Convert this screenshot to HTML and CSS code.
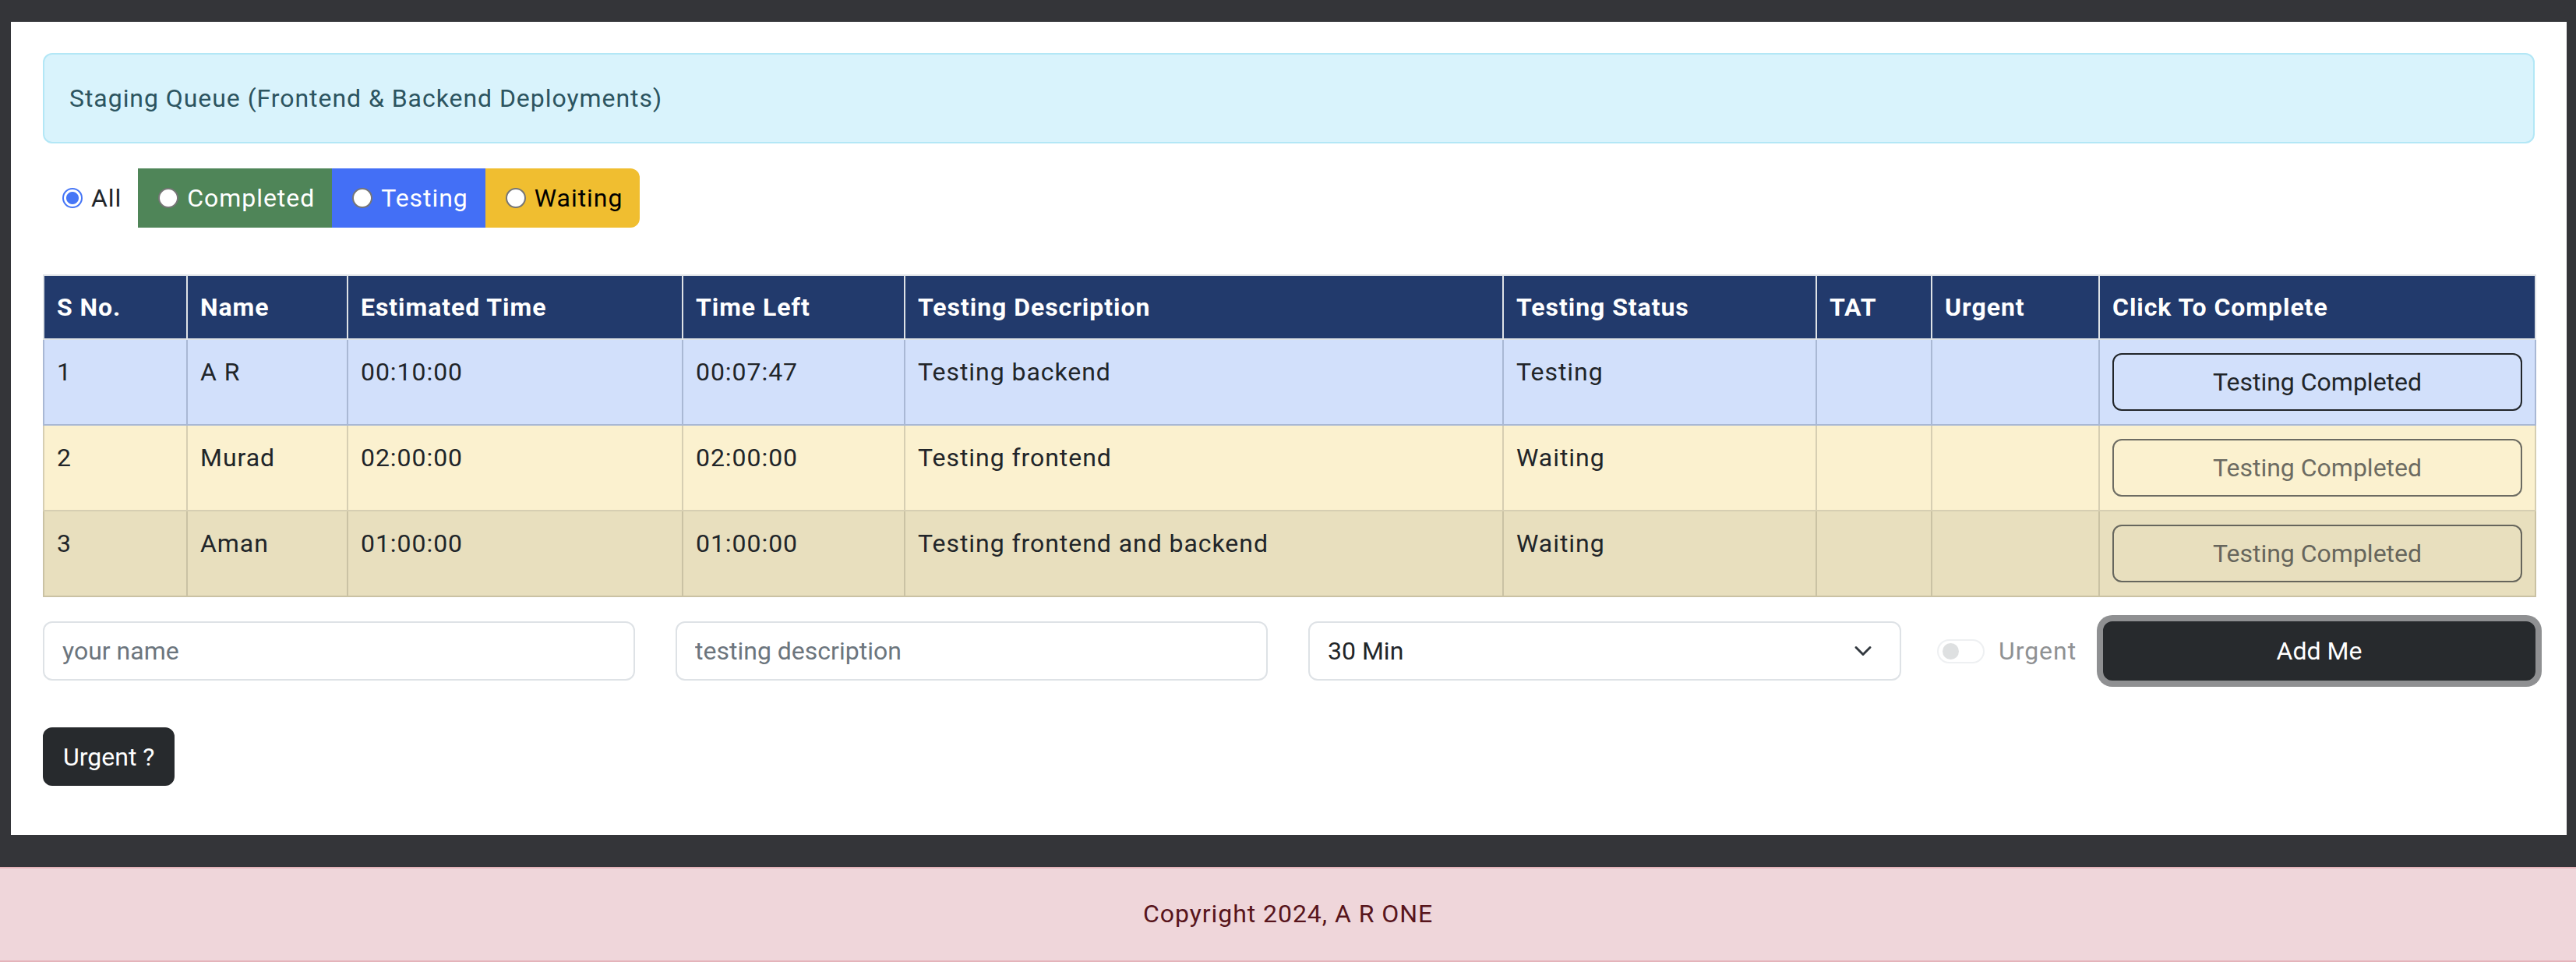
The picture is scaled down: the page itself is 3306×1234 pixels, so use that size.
FILE: index.html
```html
<!DOCTYPE html>
<html lang="en">
<head>
<meta charset="utf-8">
<title>Staging Queue</title>
<link rel="stylesheet" href="styles.css">
</head>
<body>
<div class="frame">
  <main class="panel">
    <div class="alert">Staging Queue (Frontend &amp; Backend Deployments)</div>

    <div class="filters">
      <label class="opt opt-all"><input type="radio" name="f" checked><span>All</span></label>
      <label class="opt opt-completed"><input type="radio" name="f"><span>Completed</span></label>
      <label class="opt opt-testing"><input type="radio" name="f"><span>Testing</span></label>
      <label class="opt opt-waiting"><input type="radio" name="f"><span>Waiting</span></label>
    </div>

    <table class="queue">
      <colgroup>
        <col class="c-sno"><col class="c-name"><col class="c-est"><col class="c-left"><col class="c-desc"><col class="c-status"><col class="c-tat"><col class="c-urgent"><col class="c-done">
      </colgroup>
      <thead>
        <tr>
          <th>S No.</th><th>Name</th><th>Estimated Time</th><th>Time Left</th><th>Testing Description</th><th>Testing Status</th><th>TAT</th><th>Urgent</th><th>Click To Complete</th>
        </tr>
      </thead>
      <tbody>
        <tr class="row-testing">
          <td>1</td><td>A R</td><td>00:10:00</td><td>00:07:47</td><td>Testing backend</td><td>Testing</td><td></td><td></td>
          <td><button class="done-btn" type="button">Testing Completed</button></td>
        </tr>
        <tr class="row-waiting">
          <td>2</td><td>Murad</td><td>02:00:00</td><td>02:00:00</td><td>Testing frontend</td><td>Waiting</td><td></td><td></td>
          <td><button class="done-btn" type="button" disabled>Testing Completed</button></td>
        </tr>
        <tr class="row-waiting2">
          <td>3</td><td>Aman</td><td>01:00:00</td><td>01:00:00</td><td>Testing frontend and backend</td><td>Waiting</td><td></td><td></td>
          <td><button class="done-btn" type="button" disabled>Testing Completed</button></td>
        </tr>
      </tbody>
    </table>

    <form class="add-form">
      <input class="field name-field" type="text" placeholder="your name">
      <input class="field desc-field" type="text" placeholder="testing description">
      <div class="select-wrap">
        <select class="field select">
          <option>30 Min</option>
          <option>10 Min</option>
          <option>1 Hour</option>
          <option>2 Hours</option>
        </select>
        <svg class="chev" viewBox="0 0 16 16" width="24" height="24" aria-hidden="true"><path d="M2 5l6 6 6-6" fill="none" stroke="#343a40" stroke-width="2" stroke-linecap="round" stroke-linejoin="round"/></svg>
      </div>
      <label class="switch"><span class="track"><span class="knob"></span></span><span class="switch-label">Urgent</span></label>
      <button class="btn-dark add-btn" type="button">Add Me</button>
    </form>

    <button class="btn-dark urgent-btn" type="button">Urgent ?</button>
  </main>
</div>
<footer class="footer">Copyright 2024, A R ONE</footer>
</body>
</html>
```

FILE: styles.css
```css
* { box-sizing: border-box; }

html, body {
  margin: 0;
  padding: 0;
}

body {
  background: #343539;
  font-family: Roboto, "Liberation Sans", Arial, sans-serif;
  font-size: 32px;
  line-height: 48px;
  letter-spacing: 0.95px;
  color: #212529;
}

.frame {
  padding: 28px 12px 0 14px;
}

.panel {
  background: #ffffff;
  padding: 40px 41px 63px 41px;
}

.alert {
  background: #d9f3fc;
  border: 2px solid #b3e7f6;
  border-radius: 12px;
  color: #2c5460;
  padding: 32px 32px;
  margin-bottom: 32px;
}

/* filters */
.filters {
  display: flex;
  align-items: stretch;
  height: 76px;
  margin-bottom: 60px;
}

.opt {
  display: flex;
  align-items: center;
  gap: 11px;
  padding: 0 22px 0 26px;
}

.opt input {
  appearance: none;
  -webkit-appearance: none;
  margin: 0;
  width: 26px;
  height: 26px;
  border-radius: 50%;
  border: 2px solid #767676;
  background: #ffffff;
  flex: none;
}

.opt input:checked {
  border-color: #4676f6;
  background: radial-gradient(circle, #4676f6 0 7.5px, #ffffff 8.5px);
}

.opt-all { padding: 0 21px 0 25px; }
.opt-completed { background: #4f8558; color: #ffffff; }
.opt-testing { background: #436ff6; color: #ffffff; }
.opt-waiting { background: #f0be30; color: #000000; border-radius: 0 12px 12px 0; }

/* table */
.queue {
  width: 3198px;
  border-collapse: collapse;
  table-layout: fixed;
}

.c-sno { width: 184px; }
.c-name { width: 206px; }
.c-est { width: 430px; }
.c-left { width: 285px; }
.c-desc { width: 768px; }
.c-status { width: 402px; }
.c-tat { width: 148px; }
.c-urgent { width: 215px; }
.c-done { width: 560px; }

.queue th {
  background: #223a6c;
  color: #ffffff;
  font-weight: 700;
  text-align: left;
  padding: 16px 16px;
  border: 2px solid #dee2e6;
}

.queue td {
  padding: 17px 16px;
  vertical-align: top;
  border: 2px solid;
}

.row-testing td { background: #d2e0fb; border-color: #a9b8d4; }
.row-waiting td { background: #fbf1cf; border-color: #d6ceb2; }
.row-waiting2 td { background: #e8dfbe; border-color: #cac2a4; }

.done-btn {
  display: block;
  width: 100%;
  font: inherit;
  letter-spacing: normal;
  color: #212529;
  background: transparent;
  border: 2px solid #212529;
  border-radius: 12px;
  padding: 11px 24px;
  text-align: center;
}

.done-btn:disabled {
  opacity: 0.65;
}

/* form */
.add-form {
  display: flex;
  align-items: center;
  margin-top: 31px;
}

.field {
  font: inherit;
  letter-spacing: normal;
  color: #212529;
  background: #ffffff;
  border: 2px solid #dee2e6;
  border-radius: 12px;
  padding: 12px 23px;
  width: 760px;
  height: 76px;
  outline: none;
  flex: none;
}

.desc-field { margin-left: 52px; }

.field::placeholder { color: #6c757d; }

.select-wrap {
  position: relative;
  width: 761px;
  margin-left: 52px;
  flex: none;
}

.select {
  appearance: none;
  -webkit-appearance: none;
  width: 100%;
}

.chev {
  position: absolute;
  right: 37px;
  top: 26px;
  pointer-events: none;
}

.switch {
  display: flex;
  align-items: center;
  gap: 18px;
  margin-left: 46px;
  opacity: 0.5;
  flex: none;
}

.track {
  width: 61px;
  height: 31px;
  border: 2px solid #dee2e6;
  border-radius: 16px;
  display: flex;
  align-items: center;
  padding-left: 5px;
}

.knob {
  width: 21px;
  height: 21px;
  border-radius: 50%;
  background: #bfc2c5;
}

.switch-label { color: #212529; }

.btn-dark {
  font: inherit;
  letter-spacing: normal;
  color: #ffffff;
  background: #272a2d;
  border: 2px solid #272a2d;
  border-radius: 12px;
  height: 76px;
  padding: 12px 24px;
}

.add-btn {
  width: 555px;
  flex: none;
  margin-left: auto;
  margin-right: -1px;
  box-shadow: 0 0 0 8px #8f9092;
}

.urgent-btn {
  display: block;
  margin-top: 60px;
  height: 75px;
}

/* footer */
.footer {
  margin-top: 41px;
  background: #efd6da;
  border-top: 2px solid #e4b3ba;
  border-bottom: 2px solid #e4b3ba;
  color: #58151c;
  text-align: center;
  padding: 34px 0 36px;
}
```
